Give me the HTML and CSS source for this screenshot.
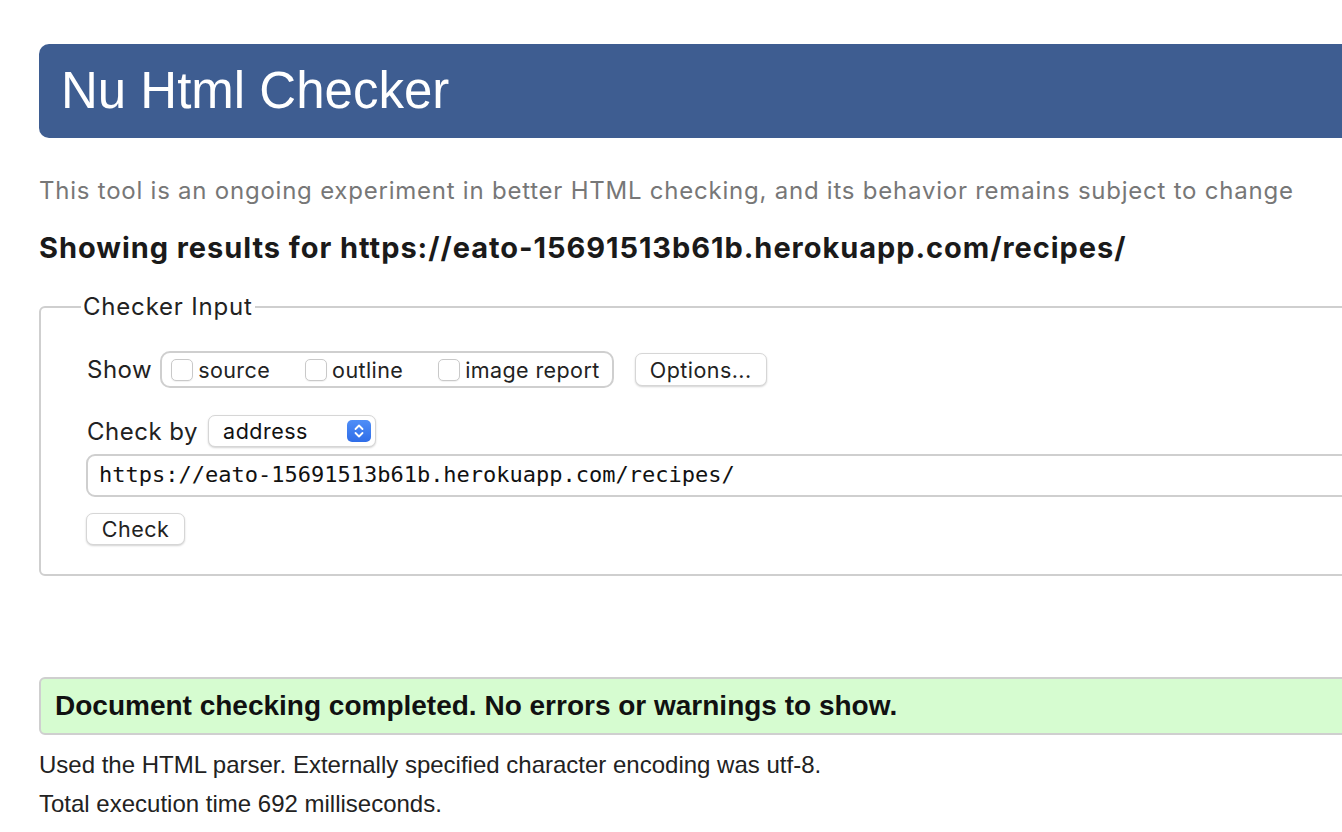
FILE: index.html
```html
<!DOCTYPE html>
<html lang="en">
<head>
<meta charset="utf-8">
<title>Nu Html Checker</title>
<link rel="stylesheet" href="styles.css">
</head>
<body>
<div class="page">
  <header class="banner"><h1>Nu Html Checker</h1></header>
  <p class="intro">This tool is an ongoing experiment in better HTML checking, and its behavior remains subject to change</p>
  <h2 class="showing">Showing results for https://eato-15691513b61b.herokuapp.com/recipes/</h2>

  <fieldset class="checker">
    <legend>Checker Input</legend>
    <div class="row show-row">
      <span class="label">Show</span>
      <div class="group">
        <label class="opt"><input type="checkbox" class="cb">source</label>
        <label class="opt"><input type="checkbox" class="cb">outline</label>
        <label class="opt"><input type="checkbox" class="cb">image report</label>
      </div>
      <button class="btn options">Options...</button>
    </div>
    <div class="row by-row">
      <span class="label">Check by</span>
      <div class="select">
        <span class="sel-text">address</span>
        <span class="stepper">
          <svg width="12" height="16" viewBox="0 0 12 16"><path d="M2.5 6 L6 2.5 L9.5 6 M2.5 10 L6 13.5 L9.5 10" fill="none" stroke="#fff" stroke-width="1.8" stroke-linecap="round" stroke-linejoin="round"/></svg>
        </span>
      </div>
    </div>
    <input class="url" type="text" value="https://eato-15691513b61b.herokuapp.com/recipes/">
    <button class="btn check">Check</button>
  </fieldset>

  <div class="success">Document checking completed. No errors or warnings to show.</div>
  <p class="details first">Used the HTML parser. Externally specified character encoding was utf-8.</p>
  <p class="details">Total execution time 692 milliseconds.</p>
</div>
</body>
</html>
```

FILE: styles.css
```css
html, body {
  margin: 0;
  padding: 0;
  overflow: hidden;
  background: #fff;
}
body {
  font-family: "Liberation Sans", Arial, sans-serif;
  color: #111;
}
.page {
  width: 1420px;
  padding: 44px 0 0 39px;
  display: flex;
  flex-direction: column;
  align-items: stretch;
}
.banner {
  background: #3e5d91;
  border-radius: 10px 0 0 10px;
  height: 94px;
  display: flex;
  align-items: center;
  padding-left: 22px;
}
.banner h1 {
  margin: 0;
  color: #fff;
  font-weight: normal;
  font-size: 51px;
  font-family: "Liberation Sans", Arial, sans-serif;
  line-height: 1;
  padding-bottom: 2px;
}
.intro {
  margin: 39px 0 0 0;
  font-family: Inter, "Noto Sans", sans-serif;
  font-size: 24px;
  letter-spacing: 0.77px;
  line-height: 28px;
  color: #777;
}
.showing {
  margin: 27px 0 0 0;
  font-family: Inter, "Noto Sans", sans-serif;
  font-weight: 700;
  font-size: 29px;
  letter-spacing: 0.95px;
  line-height: 32px;
  color: #1a1a1a;
}
.checker {
  margin: 29px 0 0 0;
  border: 2px solid #cfcfcf;
  border-radius: 6px;
  padding: 10px 0 29px 46px;
  font-family: Inter, "Noto Sans", sans-serif;
  color: #222;
  display: flex;
  flex-direction: column;
  align-items: flex-start;
}
.checker legend {
  font-size: 24px;
  letter-spacing: 0.8px;
  padding: 0 2px;
  margin-left: -6px;
  line-height: 28px;
  color: #222;
}
.row {
  display: flex;
  align-items: center;
}
.label {
  font-size: 24px;
  letter-spacing: 0.5px;
  color: #222;
}
.show-row {
  margin-top: 20px;
  height: 37px;
}
.group {
  margin-left: 8px;
  height: 33px;
  border: 2px solid #cfcfcf;
  border-radius: 10px;
  display: flex;
  align-items: center;
  padding: 0 12px 0 9px;
  gap: 35px;
}
.opt {
  display: flex;
  align-items: center;
  font-size: 21.5px;
  letter-spacing: 0.4px;
  color: #222;
}
.cb {
  -webkit-appearance: none;
  appearance: none;
  width: 22px;
  height: 22px;
  margin: 0 5px 0 0;
  border: 1px solid #c9c9c9;
  border-radius: 5px;
  background: #fff;
  box-shadow: 0 1px 1px rgba(0,0,0,0.06);
}
.btn {
  font-family: Inter, "Noto Sans", sans-serif;
  font-size: 21.5px;
  letter-spacing: 0.45px;
  color: #222;
  background: #fff;
  border: 1px solid #d6d6d6;
  border-radius: 7px;
  box-shadow: 0 1px 2px rgba(0,0,0,0.18);
  padding: 0;
}
.options {
  margin-left: 21px;
  width: 132px;
  height: 33px;
}
.by-row {
  margin-top: 26px;
  height: 34px;
}
.select {
  margin-left: 10px;
  width: 168px;
  height: 32px;
  box-sizing: border-box;
  border: 1px solid #d6d6d6;
  border-radius: 7px;
  box-shadow: 0 1px 2px rgba(0,0,0,0.18);
  background: #fff;
  display: flex;
  align-items: center;
  justify-content: space-between;
  padding: 0 4px 0 14px;
}
.sel-text {
  font-size: 21.5px;
  letter-spacing: 0.5px;
  color: #111;
}
.stepper {
  width: 24px;
  height: 22px;
  border-radius: 5px;
  background: linear-gradient(#4f8ef7, #2f6de8);
  display: flex;
  align-items: center;
  justify-content: center;
}
.url {
  margin-top: 6px;
  margin-left: -1px;
  width: 1300px;
  height: 43px;
  box-sizing: border-box;
  border: 2px solid #cfcfcf;
  border-radius: 9px;
  padding: 0 11px 2px 11px;
  font-family: "DejaVu Sans Mono", "Liberation Mono", monospace;
  font-size: 22px;
  color: #111;
  background: #fff;
}
.check {
  margin-top: 16px;
  margin-left: -1px;
  width: 99px;
  height: 32px;
}
.success {
  margin-top: 101px;
  height: 58px;
  box-sizing: border-box;
  background: #d6fcd0;
  border: 2px solid #cfcfcf;
  border-radius: 6px 0 0 6px;
  padding-left: 14px;
  display: flex;
  align-items: center;
  font-family: "Liberation Sans", Arial, sans-serif;
  font-weight: bold;
  font-size: 28px;
  color: #111;
}
.details {
  margin: 0;
  font-family: "Liberation Sans", Arial, sans-serif;
  font-size: 24px;
  line-height: 39px;
  color: #222;
}
.details.first {
  margin-top: 10px;
}
```
